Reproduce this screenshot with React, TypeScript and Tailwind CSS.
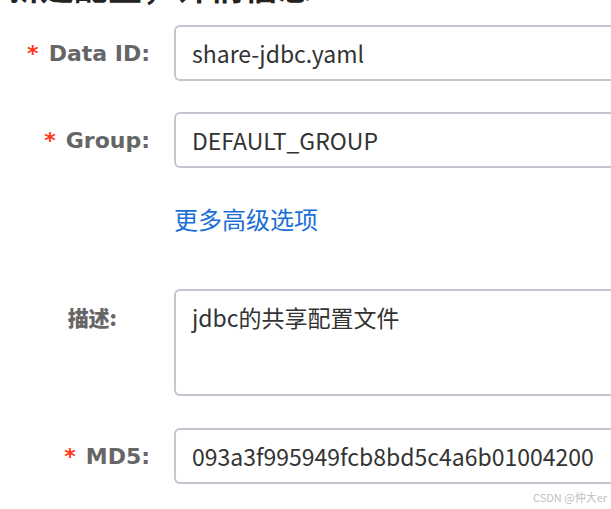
import React from "react";

const labelFont = { fontFamily: '"DejaVu Sans", "Noto Sans CJK SC", sans-serif' };

function Label({ text, required, cjk }: { text: string; required?: boolean; cjk?: boolean }) {
  return (
    <div
      className={`w-[150px] shrink-0 flex justify-end items-center font-bold text-[#666666] ${cjk ? "text-[21px] pr-[33px]" : "text-[22px]"}`}
      style={cjk ? { fontFamily: '"Noto Sans CJK SC", sans-serif', fontWeight: 900 } : labelFont}
    >
      {required && <span className="text-[#ff3a1a] mr-[10px]" style={labelFont}>*</span>}
      <span>{text}</span>
    </div>
  );
}

function Input({ value }: { value: string }) {
  return (
    <div className="ml-[24px] w-[460px] h-[56px] shrink-0 border-2 border-r-0 border-[#c4c6cf] rounded-l-[6px] flex items-center pl-[16px] text-[23px] text-[#333333] whitespace-nowrap">
      {value}
    </div>
  );
}

export default function App() {
  return (
    <div
      className="w-[611px] h-[509px] overflow-hidden bg-white relative"
      style={{ fontFamily: '"Noto Sans CJK SC", "Noto Sans", sans-serif' }}
    >
      <div className="h-[5px] overflow-hidden">
        <div className="-mt-[34px] pl-[6px] text-[34px] leading-[40px] font-bold text-[#222222] whitespace-nowrap">
          新建配置，详情信息
        </div>
      </div>

      <div className="flex flex-col">
        <div className="flex items-center mt-[20px]">
          <Label text="Data ID:" required />
          <Input value="share-jdbc.yaml" />
        </div>

        <div className="flex items-center mt-[31px]">
          <Label text="Group:" required />
          <Input value="DEFAULT_GROUP" />
        </div>

        <div className="flex mt-[35px] h-[32px]">
          <div className="w-[174px] shrink-0" />
          <a className="text-[24px] leading-[32px] text-[#1a6fd6] whitespace-nowrap">更多高级选项</a>
        </div>

        <div className="flex items-start mt-[54px]">
          <div className="pt-[13px] flex">
            <Label text="描述:" cjk />
          </div>
          <div className="ml-[24px] w-[460px] h-[107px] shrink-0 border-2 border-r-0 border-[#c4c6cf] rounded-l-[6px] pl-[16px] pt-[10px] text-[23px] leading-[32px] text-[#333333] whitespace-nowrap">
            jdbc的共享配置文件
          </div>
        </div>

        <div className="flex items-center mt-[32px]">
          <Label text="MD5:" required />
          <Input value="093a3f995949fcb8bd5c4a6b01004200" />
        </div>
      </div>

      <div
        className="absolute right-[4px] bottom-[5px] text-[11px] leading-[14px] text-[#c0c0c0]"
        style={{ fontFamily: '"Noto Sans CJK SC", sans-serif' }}
      >
        CSDN @仲大er
      </div>
    </div>
  );
}
